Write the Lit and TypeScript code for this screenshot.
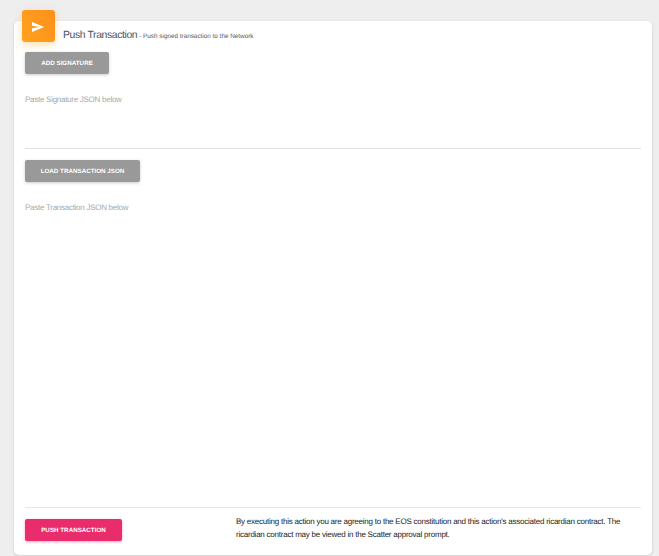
import { LitElement, html, css } from "lit";
import { customElement } from "lit/decorators.js";

@customElement("app-root")
export class AppRoot extends LitElement {
  static styles = css`
    :host {
      display: block;
      width: 659px;
      height: 556px;
      overflow: hidden;
      background: #eeeeee;
      font-family: "Liberation Sans", Arial, sans-serif;
      text-rendering: geometricPrecision;
      box-sizing: border-box;
      padding: 21px 7px 1px 14px;
    }
    .card {
      box-sizing: border-box;
      height: 534px;
      background: #fff;
      border-radius: 5px;
      box-shadow: 0 1px 3px rgba(0, 0, 0, 0.14);
      padding: 0 11px;
      display: flex;
      flex-direction: column;
    }
    .head {
      display: flex;
      height: 31px;
      margin-left: -3px;
      flex: none;
    }
    .icon {
      width: 33px;
      height: 32px;
      margin-top: -11px;
      border-radius: 3px;
      background: linear-gradient(60deg, #ffa31f, #fd8f1a);
      box-shadow: 0 3px 8px rgba(255, 152, 0, 0.3);
      display: flex;
      align-items: center;
      justify-content: center;
      flex: none;
    }
    .icon svg {
      margin-left: -2px;
      margin-top: 1px;
    }
    .title {
      margin-left: 8px;
      margin-top: 8px;
      line-height: 14px;
      white-space: nowrap;
      display: flex;
      align-items: baseline;
      gap: 2px;
    }
    .title b {
      font-weight: 400;
      font-size: 10.4px;
      letter-spacing: -0.38px;
      color: #4a5560;
    }
    .title span {
      font-size: 6.35px;
      font-weight: 400;
      color: #555;
    }
    button {
      border: 0;
      border-radius: 2px;
      height: 22px;
      padding: 0;
      color: #fff;
      font-family: inherit;
      text-rendering: geometricPrecision;
      font-size: 6.25px;
      font-weight: 700;
      display: block;
      flex: none;
    }
    .grey {
      background: #999999;
      box-shadow: 0 1px 3px rgba(153, 153, 153, 0.5);
    }
    .add {
      width: 84px;
    }
    .load {
      width: 115px;
      margin-top: 11px;
    }
    .push {
      width: 97px;
      background: #e92c6c;
      box-shadow: 0 1px 3px rgba(233, 30, 99, 0.4);
    }
    .label {
      font-size: 8px;
      letter-spacing: -0.27px;
      color: #a8a8a8;
      line-height: 11px;
      margin-top: 20px;
      flex: none;
    }
    .rule {
      height: 1px;
      background: #e0e0e0;
      flex: none;
    }
    .r1 {
      margin-top: 43px;
    }
    .spacer {
      flex: 1;
    }
    .r2 {
      height: 1.5px;
      background: #e6e6e6;
    }
    .foot {
      display: flex;
      margin-top: 11px;
      margin-bottom: 14px;
      align-items: flex-start;
      gap: 114px;
    }
    .foot p {
      margin: -4px 0 0;
      font-size: 8px;
      letter-spacing: -0.234px;
      line-height: 13px;
      color: #222;
      width: 392px;
    }
  `;

  render() {
    return html`
      <div class="card">
        <div class="head">
          <div class="icon">
            <svg width="12" height="10" viewBox="0 0 12 10">
              <path d="M0 0 L12 5 L0 10 L0 6.2 L7.5 5 L0 3.8 Z" fill="#fff"></path>
            </svg>
          </div>
          <div class="title"><b>Push Transaction</b><span>- Push signed transaction to the Network</span></div>
        </div>
        <button class="grey add">ADD SIGNATURE</button>
        <div class="label">Paste Signature JSON below</div>
        <div class="rule r1"></div>
        <button class="grey load">LOAD TRANSACTION JSON</button>
        <div class="label">Paste Transaction JSON below</div>
        <div class="spacer"></div>
        <div class="rule r2"></div>
        <div class="foot">
          <button class="push">PUSH TRANSACTION</button>
          <p>By executing this action you are agreeing to the EOS constitution and this action's associated ricardian contract. The ricardian contract may be viewed in the Scatter approval prompt.</p>
        </div>
      </div>
    `;
  }
}
